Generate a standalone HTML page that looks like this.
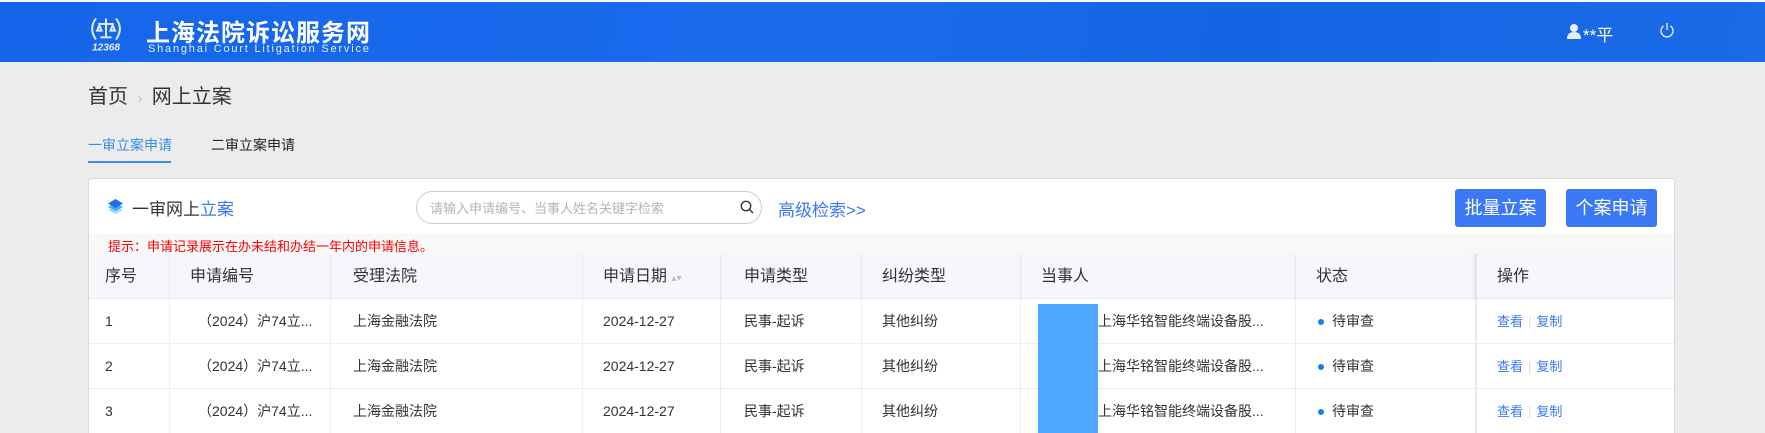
<!DOCTYPE html>
<html><head><meta charset="utf-8"><style>
*{margin:0;padding:0;box-sizing:border-box}
html{width:1765px;height:433px;overflow:hidden}
body{width:1765px;height:433px;overflow:hidden;background:#ececec;font-family:"Liberation Sans","Noto Sans CJK SC",sans-serif;position:relative;color:#333}
.hdr{position:absolute;left:0;top:2px;width:1765px;height:60px;background:linear-gradient(100deg,#1566ea 0%,#1a6cec 50%,#1464e4 70%,#1b6be8 100%)}
.topline{position:absolute;left:0;top:0;width:1765px;height:2px;background:#fff}
.abs{position:absolute;white-space:nowrap}
.card{position:absolute;left:88px;top:178px;width:1587px;height:255px;background:#fff;border:1px solid #d8d8d8;border-bottom:none;border-radius:3px 3px 0 0;overflow:hidden}
.th{position:absolute;top:75px;height:45px;line-height:45px;font-size:16px;color:#333;background:#f5f7fa;border-right:1px solid #e6e9ef;border-bottom:1px solid #e6e9ef}
.td{position:absolute;height:45px;line-height:45px;font-size:14px;color:#333;border-right:1px solid #ebeef3;border-bottom:1px solid #ebeef3;white-space:nowrap}
.btn{position:absolute;top:10px;height:38px;line-height:38px;width:91px;text-align:center;background:#3b78f6;color:#fff;font-size:18px;border-radius:3px}
</style></head><body>
<div class="topline"></div>
<div class="hdr">
  <svg class="abs" style="left:86px;top:13px" width="40" height="38" viewBox="0 0 36 34">
    <g fill="none" stroke="#dfe8ff" stroke-width="1.8">
      <path d="M9 3 Q2 12 9 22"/><path d="M27 3 Q34 12 27 22"/>
      <path d="M18 3 V20 M11 8 H25 M13 20 H23"/><path d="M12 9 L10 14 H14 Z M24 9 L22 14 H26 Z"/>
    </g>
    <text x="18" y="32" text-anchor="middle" font-size="9" font-style="italic" font-weight="bold" fill="#e6eeff" font-family="Liberation Sans">12368</text>
  </svg>
  <div class="abs" style="left:146px;top:11px;font-size:24px;font-weight:bold;color:#fff;letter-spacing:1px">上海法院诉讼服务网</div>
  <div class="abs" style="left:148px;top:41px;font-size:11px;color:#e5edff;letter-spacing:1.8px">Shanghai Court Litigation Service</div>
  <svg class="abs" style="left:1566px;top:21px" width="16" height="16" viewBox="0 0 16 16"><circle cx="8" cy="5" r="4" fill="#e6eeff"/><path d="M1 16 Q1 9 8 9 Q15 9 15 16Z" fill="#e6eeff"/></svg>
  <div class="abs" style="left:1583px;top:19px;font-size:17px;color:#fff">**平</div>
  <svg class="abs" style="left:1659px;top:20px" width="16" height="16" viewBox="0 0 16 16" fill="none" stroke="#dfe8ff" stroke-width="1.4"><path d="M4.5 4 A6 6 0 1 0 11.5 4"/><path d="M8 1 V8"/></svg>
</div>
<div class="abs" style="left:88px;top:80px;font-size:20px;color:#333">首页 <span style="color:#bbb;font-size:14px;margin:0 4px">›</span> 网上立案</div>
<div class="abs" style="left:88px;top:135px;font-size:14px;color:#3a8ee6">一审立案申请</div>
<div class="abs" style="left:211px;top:135px;font-size:14px;color:#222">二审立案申请</div>
<div class="abs" style="left:88px;top:161px;width:83px;height:2px;background:#3a8ee6"></div>
<div class="card">
  <svg class="abs" style="left:19px;top:20px" width="15" height="17" viewBox="0 0 15 17"><path d="M7.5 7 L15 11 L7.5 15 L0 11Z" fill="#9fdcf8"/><path d="M7.5 4 L15 8 L7.5 12 L0 8Z" fill="#3fb4f0"/><path d="M7.5 0 L15 4.5 L7.5 9 L0 4.5Z" fill="#1e70e6"/></svg>
  <div class="abs" style="left:43px;top:16px;font-size:17px;color:#333">一审网上<span style="color:#3a78f6">立案</span></div>
  <div class="abs" style="left:327px;top:12px;width:346px;height:33px;border:1px solid #ccc;border-radius:17px;background:#fff"></div>
  <div class="abs" style="left:341px;top:19px;font-size:13px;color:#b5b5b5">请输入申请编号、当事人姓名关键字检索</div>
  <svg class="abs" style="left:651px;top:21px" width="14" height="14" viewBox="0 0 14 14" fill="none" stroke="#333" stroke-width="1.4"><circle cx="6" cy="6" r="4.7"/><path d="M9.5 9.5 L13 13"/></svg>
  <div class="abs" style="left:689px;top:17px;font-size:17px;color:#3a78f6">高级检索&gt;&gt;</div>
  <div class="btn" style="left:1366px">批量立案</div>
  <div class="btn" style="left:1477px">个案申请</div>
  <div class="abs" style="left:0;top:55px;width:1587px;height:20px;background:#f8f8f8"></div>
  <div class="abs" style="left:19px;top:57px;font-size:13px;color:#f00">提示：申请记录展示在办未结和办结一年内的申请信息。</div>
  <div class="th" style="left:0;width:81px;padding-left:16px">序号</div>
  <div class="th" style="left:81px;width:161px;padding-left:20px">申请编号</div>
  <div class="th" style="left:242px;width:252px;padding-left:22px">受理法院</div>
  <div class="th" style="left:494px;width:138px;padding-left:20px">申请日期 <span style="color:#bbb;font-size:10px">▴▾</span></div>
  <div class="th" style="left:632px;width:141px;padding-left:23px">申请类型</div>
  <div class="th" style="left:773px;width:159px;padding-left:20px">纠纷类型</div>
  <div class="th" style="left:932px;width:275px;padding-left:20px">当事人</div>
  <div class="th" style="left:1207px;width:180px;padding-left:20px">状态</div>
  <div class="th" style="left:1387px;width:200px;padding-left:20px;border-left:1px solid #e0e3e8;box-shadow:-3px 0 4px rgba(0,0,0,0.05)">操作</div>
  <div id="rows"></div>
  <div class="abs" style="left:949px;top:125px;width:60px;height:130px;background:#4da9ff"></div>
</div>
<script>
var h='';for(var i=0;i<3;i++){var t=120+i*45;
h+='<div class="td" style="top:'+t+'px;left:0;width:81px;padding-left:16px">'+(i+1)+'</div>'+
'<div class="td" style="top:'+t+'px;left:81px;width:161px;padding-left:28px">（2024）沪74立...</div>'+
'<div class="td" style="top:'+t+'px;left:242px;width:252px;padding-left:22px">上海金融法院</div>'+
'<div class="td" style="top:'+t+'px;left:494px;width:138px;padding-left:20px">2024-12-27</div>'+
'<div class="td" style="top:'+t+'px;left:632px;width:141px;padding-left:23px">民事-起诉</div>'+
'<div class="td" style="top:'+t+'px;left:773px;width:159px;padding-left:20px">其他纠纷</div>'+
'<div class="td" style="top:'+t+'px;left:932px;width:275px;padding-left:77px">上海华铭智能终端设备股...</div>'+
'<div class="td" style="top:'+t+'px;left:1207px;width:180px;padding-left:22px"><span style="display:inline-block;width:6px;height:6px;border-radius:3px;background:#1a7cf0;vertical-align:middle;margin-right:8px"></span>待审查</div>'+
'<div class="td" style="top:'+t+'px;left:1387px;width:200px;padding-left:20px;border-left:1px solid #e0e3e8;font-size:13px;color:#3a78f6">查看<span style="color:#ddd;margin:0 5px">|</span>复制</div>';}
document.getElementById('rows').innerHTML=h;
</script>
</body></html>
